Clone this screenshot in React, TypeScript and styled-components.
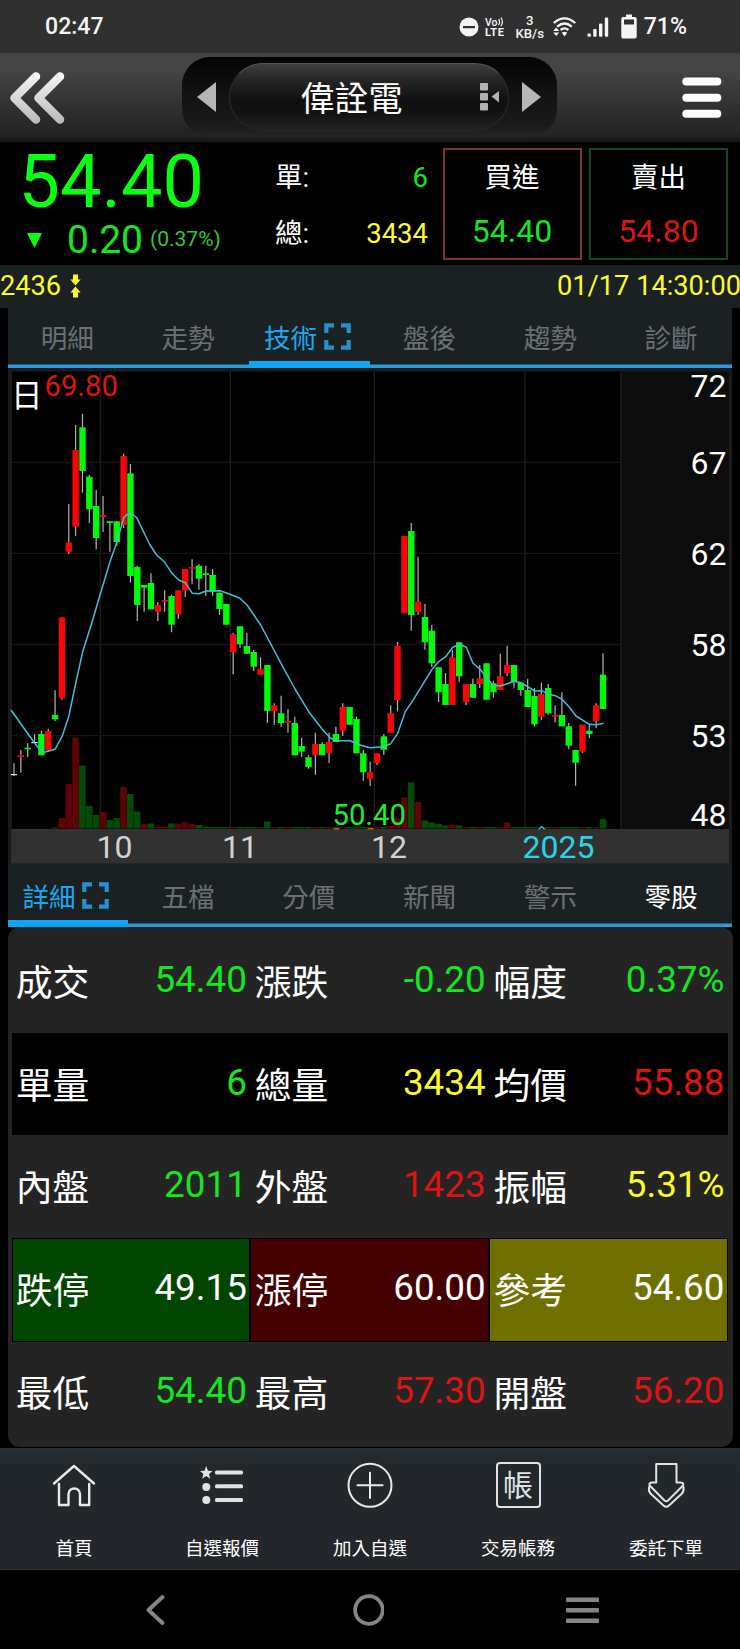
import React from "react";
import styled, { createGlobalStyle } from "styled-components";

const GREEN = "#16e620";
const RED = "#dc1414";
const YELLOW = "#fbfb2a";
const BLUE = "#1ea7ee";
const STRIP = "#1b2123";

const GlobalStyle = createGlobalStyle`
  * { box-sizing: border-box; }
  html, body { margin: 0; padding: 0; background: #000; }
  body { font-family: Roboto, "Noto Sans CJK TC", sans-serif; color: #fff; }
  svg { display: block; flex: none; }
`;

const Screen = styled.div`
  width: 740px;
  height: 1649px;
  display: flex;
  flex-direction: column;
  background: #000;
  overflow: hidden;
  white-space: nowrap;
`;

/* ---------- status bar ---------- */

const StatusBar = styled.div`
  height: 53px;
  flex: none;
  display: flex;
  align-items: center;
  justify-content: space-between;
  padding: 0 53px 0 45px;
  background: #303030;
  font-size: 23.1px;
  font-weight: 500;
  line-height: 28px;
  color: #f4f4f4;
`;

const StatusIcons = styled.div`
  display: flex;
  align-items: center;
`;

const Stack = styled.div<{ $size: number; $width: number; $lead: number }>`
  display: flex;
  flex-direction: column;
  align-items: center;
  width: ${(p) => p.$width}px;
  font-size: ${(p) => p.$size}px;
  line-height: ${(p) => p.$lead}px;
  font-weight: 500;
`;

const Spacer = styled.div<{ $w: number }>`
  width: ${(p) => p.$w}px;
  flex: none;
`;

const VolteIcon = styled.svg`
  overflow: visible;
`;

/* ---------- header ---------- */

const Header = styled.div`
  height: 90px;
  flex: none;
  display: flex;
  align-items: flex-start;
  padding-left: 8px;
  background: linear-gradient(#434343 0%, #454545 18%, #2c2c2c 70%, #242424 92%, #151515 100%);
  border-bottom: 1px solid #0a0a0a;
`;

const BackIcon = styled.svg`
  margin: 18px 116px 0 0;
`;

const Selector = styled.div`
  width: 375px;
  height: 80px;
  margin-top: 4px;
  display: flex;
  align-items: center;
  border-radius: 28px;
  background: linear-gradient(#040404, #121212 45%, #1a1a1a 85%, #252525);
`;

const Pill = styled.div`
  width: 280px;
  height: 68px;
  margin: 0 13px 0 12px;
  padding: 0 8px 0 71px;
  display: flex;
  align-items: center;
  border-radius: 34px;
  border: 1px solid #2c2c2c;
  border-top-color: #555;
  border-bottom-color: #262626;
  background: linear-gradient(#3f3f3f 0%, #272727 22%, #101010 55%, #131313 75%, #232323 100%);
`;

const StockName = styled.div`
  font-size: 34px;
  line-height: 44px;
  padding-top: 3px;
  flex: 1;
`;

const MenuIcon = styled.svg`
  margin: 24px 0 0 125px;
`;

/* ---------- quote ---------- */

const Quote = styled.div`
  height: 122px;
  flex: none;
  display: flex;
`;

const PriceBlock = styled.div`
  width: 275px;
  padding: 8px 0 0 18.5px;
`;

const BigPrice = styled.div`
  font-size: 73.8px;
  line-height: 62px;
  color: #0bff10;
`;

const ChangeRow = styled.div`
  display: flex;
  align-items: center;
  height: 54px;
  padding-left: 8.5px;
  color: ${GREEN};
`;

const Change = styled.div`
  margin-left: 25px;
  width: 83px;
  font-size: 39px;
  line-height: 54px;
`;

const ChangePct = styled.div`
  font-size: 21px;
  line-height: 50px;
  color: #32c832;
  padding-bottom: 3px;
`;

const VolumeBlock = styled.div`
  width: 153px;
  margin-right: 14.5px;
  padding-top: 7px;
`;

const VolumeRow = styled.div`
  display: flex;
  justify-content: space-between;
  font-size: 27.5px;
  line-height: 56px;
  height: 56px;
`;

const Num = styled.span<{ $c: string }>`
  color: ${(p) => p.$c};
`;

const SideBox = styled.div<{ $edge: string }>`
  width: 139px;
  height: 112px;
  margin: 5px 7.5px 0 0;
  padding-top: 2px;
  border: 2px solid ${(p) => p.$edge};
  display: flex;
  flex-direction: column;
  align-items: center;
`;

const SideLabel = styled.div`
  font-size: 27.5px;
  line-height: 52px;
`;

const SidePrice = styled.div<{ $c: string }>`
  font-size: 32px;
  line-height: 54px;
  color: ${(p) => p.$c};
`;

const TimeStrip = styled.div`
  height: 43px;
  flex: none;
  display: flex;
  align-items: center;
  padding-bottom: 2px;
  background: ${STRIP};
  color: ${YELLOW};
  font-size: 27.2px;
  line-height: 36px;
`;

const Stamp = styled.div`
  margin-left: auto;
  margin-right: -1px;
`;

/* ---------- tabs ---------- */

const Tabs = styled.div<{ $h: number }>`
  height: ${(p) => p.$h}px;
  flex: none;
  margin: 0 8px 0 7.5px;
  display: grid;
  grid-template-columns: repeat(6, 1fr);
  background: ${STRIP};
  box-shadow: inset 0 -3.5px 0 #2a9cdb;
`;

const Tab = styled.div<{ $active?: boolean; $bright?: boolean; $top: number }>`
  display: flex;
  justify-content: center;
  gap: 6.5px;
  padding-top: ${(p) => p.$top}px;
  padding-right: ${(p) => (p.$active ? 4 : 1)}px;
  font-size: 26.6px;
  line-height: 40px;
  color: ${(p) => (p.$active ? BLUE : p.$bright ? "#fff" : "#6a7073")};
  border-bottom: ${(p) => (p.$active ? "7px solid #0ea6f4" : "0")};
  & > svg { margin-top: 4px; }
`;

/* ---------- detail table ---------- */

const Detail = styled.div`
  height: 520px;
  flex: none;
  margin: 0 7.5px;
  padding: 3px 4.5px 3px 4px;
  border-radius: 12px;
  background: #242424;
`;

const Row = styled.div<{ $dark?: boolean }>`
  display: grid;
  grid-template-columns: repeat(3, 1fr);
  height: 102.7px;
  background: ${(p) => (p.$dark ? "#000" : "transparent")};
`;

const Cell = styled.div<{ $bg?: string }>`
  display: flex;
  justify-content: space-between;
  padding: 0 ${(p) => (p.$bg ? 2.5 : 3.5)}px 0 ${(p) => (p.$bg ? 3.3 : 4.3)}px;
  font-size: 36.8px;
  line-height: ${(p) => (p.$bg ? 98 : 99)}px;
  background: ${(p) => p.$bg || "transparent"};
  border: ${(p) => (p.$bg ? "1px solid #000" : "0")};
`;

const CellLabel = styled.span`
  padding-top: 4px;
`;

/* ---------- bottom navigation ---------- */

const Nav = styled.div`
  height: 122px;
  flex: none;
  margin-top: 1px;
  display: grid;
  grid-template-columns: repeat(5, 1fr);
  background: linear-gradient(#2b2f32, #23282c 8%, #23272b);
  border-bottom: 1px solid #2c3032;
`;

const NavItem = styled.div`
  display: flex;
  flex-direction: column;
  align-items: center;
  padding-top: 12px;
  font-size: 18.5px;
  line-height: 30px;
  gap: 24px;
`;

const LedgerIcon = styled.div`
  width: 45px;
  height: 46px;
  margin: 2px 0;
  border: 2px solid #dfe3e6;
  border-radius: 4px;
  font-size: 30px;
  line-height: 43px;
  text-align: center;
  color: #dfe3e6;
`;

const SystemBar = styled.div`
  flex: 1;
  display: flex;
  justify-content: space-between;
  align-items: center;
  padding: 0 141px 0 145px;
`;

/* ---------- chart data ---------- */

type Candle = [string, number, number, number, number];

// colour, high, body top, body bottom, low (y positions on the plot)
const CANDLES: Candle[] = [
  ["w", 763.3, 774, 775, 776], ["r", 750, 755.3, 757, 772.7], ["g", 743.3, 747.7, 749.3, 757],
  ["w", 734.3, 742, 743, 743], ["g", 730.7, 734, 755.3, 755.3], ["r", 728.7, 731, 750.3, 752],
  ["g", 690.3, 715, 719, 721], ["r", 617.3, 617.3, 698, 699.7], ["r", 504, 542.7, 551.7, 554],
  ["r", 425, 450, 526.7, 536], ["g", 413.7, 427.3, 471, 492.7], ["g", 475, 476.7, 509.3, 523],
  ["g", 490, 506, 538, 549.5], ["r", 496, 515, 517, 532], ["g", 521.3, 521.3, 523, 551.7],
  ["g", 521.3, 521.3, 542, 546], ["r", 453.7, 456, 525, 528], ["g", 464, 473.3, 576, 582.7],
  ["g", 565.7, 567, 605, 621], ["g", 585, 585, 587.7, 611.7], ["g", 573.3, 583, 609.3, 609.3],
  ["r", 602, 605, 611.7, 621], ["r", 590.3, 600, 601.7, 611.7], ["g", 594.7, 596, 624.7, 632.3],
  ["r", 590.3, 590.3, 614.3, 619], ["r", 569, 569, 590.3, 597], ["r", 559.3, 567, 568.7, 584.3],
  ["g", 564, 565.7, 578.7, 589.7], ["g", 565.7, 573.3, 575, 595.7], ["g", 569, 575, 591.7, 595.7],
  ["g", 592.7, 592.7, 609, 615], ["g", 604, 604, 624.7, 624.7], ["r", 632.7, 634.3, 652, 674.3],
  ["g", 626.3, 626.3, 644.3, 647.7], ["g", 632.7, 646, 653.7, 653.7], ["g", 650, 652, 666.7, 671],
  ["r", 657.3, 669, 674.7, 674.7], ["g", 665, 665, 711, 723], ["r", 703.3, 705.3, 711.3, 724.7],
  ["g", 695.7, 713.3, 723, 726.7], ["r", 709.3, 721, 722.7, 732.7], ["g", 716.7, 723, 755.3, 755.3],
  ["g", 738, 746, 751.7, 757], ["g", 755.3, 757.3, 767, 768.7], ["r", 732.7, 744, 755.3, 774.7],
  ["g", 742.3, 744, 755.3, 755.3], ["r", 732.7, 742, 753.3, 763], ["g", 726.7, 734, 742, 742],
  ["r", 703.3, 707, 730.7, 736], ["g", 707, 707, 724.7, 724.7], ["g", 716.7, 719, 753.3, 753.3],
  ["g", 749.7, 753.3, 772.3, 780.7], ["r", 761.7, 772.3, 778.7, 786], ["r", 753.3, 753.3, 763, 765],
  ["g", 734, 736.3, 749.7, 755], ["r", 705.3, 713.3, 732.7, 732.7], ["r", 642, 645.7, 700, 711.3],
  ["r", 536, 536, 613.3, 613.3], ["g", 523, 531, 615, 630.7], ["r", 557, 601.7, 612, 615],
  ["g", 604, 617, 642.3, 649.7], ["g", 624.7, 630.7, 663.3, 667], ["g", 667.3, 667.3, 692.3, 702],
  ["g", 673, 684, 705, 705], ["r", 650, 657.3, 705, 705], ["g", 642.3, 642.3, 676.3, 682],
  ["r", 684, 684, 702, 705], ["g", 678.7, 684, 697.7, 697.7], ["r", 665, 678.3, 684, 688],
  ["g", 663.3, 663.3, 699.7, 699.7], ["g", 680.7, 683.3, 692.3, 697.7], ["r", 653.7, 676.3, 690, 690],
  ["r", 645.7, 665, 673.3, 676], ["g", 665, 665, 682, 687.7], ["g", 683, 683, 690, 695.7],
  ["g", 678.7, 690, 707, 707], ["g", 688.3, 696, 724.3, 726.3], ["r", 682.7, 694, 716.7, 720.3],
  ["g", 684, 688, 713.3, 714.7], ["r", 705.3, 715, 716.7, 722.3], ["g", 692.3, 715, 726.3, 726.3],
  ["g", 723, 726.3, 745.7, 749.3], ["g", 750, 750, 762.7, 785.7], ["r", 724.7, 724.7, 751.7, 753],
  ["g", 724.7, 730.7, 734, 738], ["r", 703.3, 705.3, 721, 728.3], ["g", 653.3, 674.7, 709, 709],
];

// bar height by candle index; the rest are a thin trace at the base
const VOLUMES: Record<number, number> = {
  0: 0, 1: 0, 2: 0, 3: 0, 4: 0, 5: 0, 6: 1, 7: 10.5, 8: 44.5, 9: 91, 10: 63, 11: 22.5, 12: 13.5, 13: 16.5,
  14: 8.5, 15: 10.5, 16: 41.5, 17: 34.5, 18: 17, 19: 4.5, 20: 5, 21: 2, 22: 2, 23: 5, 24: 4.5, 25: 6,
  26: 4.5, 27: 3.5, 28: 2, 37: 7, 55: 3, 56: 10, 57: 31, 58: 46, 59: 26.5, 60: 8, 61: 6, 62: 4.5,
  63: 3, 64: 4, 65: 3, 72: 6, 86: 9.5,
};

const AVERAGE =
  "11,710 34.7,743.3 40,750 44.3,752.3 55,749.3 62,736.7 68.7,716.7 75.7,683.3 82.7,651.7 92.7,620 100,595 110,561.7 117,541.7 123.7,517.7 126.5,514.8 130,514 133.5,515 136.7,517.7 150,545 156.7,555 164.7,562.3 172,573.3 178.7,580 185.3,582.7 192.3,593.3 199,593.7 206,591 220,590.7 230,594.3 240,598.3 247,605 260.7,625 281,663.3 295,689 308.7,711.7 322.3,729.3 330,737.7 336.7,740.7 350,740.7 360,745 370,747.7 384,746.7 390.7,743.7 397.7,733.3 405.3,711.7 411.7,702.3 432,669.3 438.7,661.7 445.7,656.7 452.7,647.3 459.3,644 466.3,647.3 473,663.3 480,669.3 490,681.7 493,685.3 500.3,686 514,681.3 521,682.7 534.7,691 541.7,690.7 548.3,694.3 555.3,695.7 562,699.3 569,706.7 576,716 589.3,724.3 596.3,724.7 603.7,723.3";

const BODY: Record<string, string> = { r: "#fb0408", g: "#02fb0a", w: "#ddd" };
const candleX = (i: number) => 14 + i * 6.849;

const ChartWrap = styled.div`
  height: 496px;
  flex: none;
`;

const ChartText = styled.text`
  font-family: Roboto, "Noto Sans CJK TC", sans-serif;
`;

const Chart = () => (
  <ChartWrap>
    <svg width="740" height="496" viewBox="0 368 740 496">
      <rect x="8" y="368" width="724" height="496" fill="#1b1b1b" />
      <rect x="12" y="371.5" width="609" height="457.5" fill="#000" />
      <rect x="621" y="371.5" width="108" height="457.5" fill="#0c0c0c" />
      <g stroke="#202020" strokeWidth="1.3">
        {[100.3, 230.3, 374.3, 525, 621].map((x) => (
          <line key={x} x1={x} x2={x} y1="372" y2="829" />
        ))}
      </g>
      <g stroke="#141414" strokeWidth="1.3">
        {[462.3, 553.3, 644.5, 735.7].map((y) => (
          <line key={y} x1="12" x2="621" y1={y} y2={y} />
        ))}
      </g>
      {CANDLES.map((c, i) => {
        const h = VOLUMES[i] ?? 1.6;
        return (
          <rect
            key={i}
            x={candleX(i) - 3.4}
            y={828.5 - h}
            width="6.6"
            height={h}
            fill={c[0] === "g" && i !== 19 ? "#054a08" : "#5e0406"}
          />
        );
      })}
      {CANDLES.map(([c, hi, top, bottom, lo], i) => (
        <g key={i}>
          <line x1={candleX(i)} x2={candleX(i)} y1={hi} y2={lo} stroke="#b5b5b5" strokeWidth="1.2" />
          <rect x={candleX(i) - 3.2} y={top} width="6.4" height={Math.max(bottom - top, 1.2)} fill={BODY[c]} />
        </g>
      ))}
      <polyline points={AVERAGE} fill="none" stroke="#46bdd6" strokeWidth="1.5" strokeLinejoin="round" />
      <rect x="11" y="829" width="718" height="34.5" fill="#313131" />
      <rect x="333.5" y="828" width="6" height="1.5" fill="#a8642a" />
      <rect x="367.5" y="828" width="6" height="1.5" fill="#a8642a" />
      <path d="M538.8 829.2L541.7 826.6L544.6 829.2" fill="none" stroke="#2bd3e6" strokeWidth="1.3" />
      <ChartText x="11" y="406.5" fontSize="31.5" fill="#fff">日</ChartText>
      <ChartText x="44.5" y="396.3" fontSize="29.2" fill={RED}>69.80</ChartText>
      <ChartText x="332.5" y="825.3" fontSize="29.2" fill="#22ee2a">50.40</ChartText>
      <g fontSize="32" fill="#fff" textAnchor="end">
        <ChartText x="726.5" y="397">72</ChartText>
        <ChartText x="726.5" y="474">67</ChartText>
        <ChartText x="726.5" y="564.5">62</ChartText>
        <ChartText x="726.5" y="655.5">58</ChartText>
        <ChartText x="726.5" y="746.7">53</ChartText>
        <ChartText x="726.5" y="825.5">48</ChartText>
      </g>
      <g fontSize="32" fill="#d2d2d2">
        <ChartText x="96.5" y="857.5">10</ChartText>
        <ChartText x="222" y="857.5">11</ChartText>
        <ChartText x="371" y="857.5">12</ChartText>
        <ChartText x="522.5" y="857.5" fill="#2bd3e6">2025</ChartText>
      </g>
    </svg>
  </ChartWrap>
);

/* ---------- icons ---------- */

const Expand = () => (
  <svg width="27" height="27" viewBox="0 0 27 27" fill="none" stroke="#2391cf" strokeWidth="4.2">
    <path d="M2.3 10V2.3H10M17 2.3H24.7V10M24.7 17V24.7H17M10 24.7H2.3V17" />
  </svg>
);

const HomeIcon = () => (
  <svg width="50" height="50" viewBox="0 0 50 50" fill="none" stroke="#e6eaed" strokeWidth="2.4" strokeLinejoin="round" strokeLinecap="round">
    <path d="M5 23.5L25 6L45 23.5" />
    <path d="M10 24V45H19.500V34.500C19.500 26.500 31 26.500 31 34.500V45H40.200V24" />
  </svg>
);

const ListIcon = () => (
  <svg width="50" height="50" viewBox="0 0 50 50" fill="#dfe3e6">
    <path d="M9.200 6L11 10.800L15.500 11L12 14L13.200 18.800L9.200 16L5.200 18.800L6.400 14L3 11L7.500 10.800Z" />
    <circle cx="9.300" cy="27" r="4" />
    <circle cx="9.300" cy="40" r="4" />
    <rect x="18" y="10.500" width="28" height="4" rx="1.500" />
    <rect x="18" y="24.300" width="28" height="4" rx="1.500" />
    <rect x="18" y="38" width="28" height="4" rx="1.500" />
  </svg>
);

const PlusIcon = () => (
  <svg width="50" height="50" viewBox="0 0 50 50" fill="none" stroke="#e6eaed" strokeWidth="2" strokeLinecap="round">
    <circle cx="25" cy="25.300" r="21.500" />
    <path d="M25 12.800V38M12.400 25.300H37.600" />
  </svg>
);

const OrderIcon = () => (
  <svg width="50" height="50" viewBox="0 0 50 50" fill="none" stroke="#dfe3e6" strokeWidth="2" strokeLinejoin="round" strokeLinecap="round">
    <path d="M15.200 4H35.500V22.500H39.500C42.500 22.500 43 24 41.500 26L27 40.500Q25.300 42 23.500 40.500L9.200 26C7.500 24 8.500 22.500 11 22.500H15.200Z" />
    <path d="M8.300 26.500C7.500 29.500 7.800 31.500 9.500 33.500L22.500 45.500Q25.200 48 28 45.500L41 33.500C42.800 31.500 43 29.500 42.300 26.500" />
  </svg>
);

const NAV_ITEMS: [React.ReactNode, string][] = [
  [<HomeIcon />, "首頁"],
  [<ListIcon />, "自選報價"],
  [<PlusIcon />, "加入自選"],
  [<LedgerIcon>帳</LedgerIcon>, "交易帳務"],
  [<OrderIcon />, "委託下單"],
];

type Field = [string, string, string, string?];

const ROWS: { dark?: boolean; cells: Field[] }[] = [
  { cells: [["成交", "54.40", GREEN], ["漲跌", "-0.20", GREEN], ["幅度", "0.37%", GREEN]] },
  { dark: true, cells: [["單量", "6", GREEN], ["總量", "3434", YELLOW], ["均價", "55.88", RED]] },
  { cells: [["內盤", "2011", GREEN], ["外盤", "1423", RED], ["振幅", "5.31%", YELLOW]] },
  { cells: [["跌停", "49.15", "#fff", "#004500"], ["漲停", "60.00", "#fff", "#450000"], ["參考", "54.60", "#fff", "#707000"]] },
  { cells: [["最低", "54.40", GREEN], ["最高", "57.30", RED], ["開盤", "56.20", RED]] },
];

const UPPER_TABS = ["明細", "走勢", "技術", "盤後", "趨勢", "診斷"];
const LOWER_TABS = ["詳細", "五檔", "分價", "新聞", "警示", "零股"];

export default function App() {
  return (
    <Screen>
      <GlobalStyle />
      <StatusBar>
        <div>02:47</div>
        <StatusIcons>
          <svg width="20" height="20" viewBox="0 0 20 20">
            <circle cx="10" cy="10" r="9.500" fill="#f4f4f4" />
            <rect x="4" y="9" width="12" height="2.200" fill="#303030" />
          </svg>
          <Spacer $w={6} />
          <VolteIcon width="20" height="20" viewBox="0 0 20 20" fill="#f4f4f4">
            <text x="0" y="8.500" fontSize="10.500" fontWeight="500" fontFamily="Roboto">Vo</text>
            <text x="0" y="19" fontSize="11" fontWeight="700" fontFamily="Roboto" textLength="19">LTE</text>
            <path d="M13.600 2.200Q15.600 4.800 13.600 8M15.800 0.600Q19 4.600 15.800 9.200" fill="none" stroke="#f4f4f4" strokeWidth="1.200" />
          </VolteIcon>
          <Spacer $w={10} />
          <Stack $size={13.2} $width={29} $lead={13}>
            <span>3</span>
            <span>KB/s</span>
          </Stack>
          <Spacer $w={9} />
          <svg width="23" height="20" viewBox="0 0 23 20" fill="none" stroke="#f4f4f4" strokeWidth="2.300">
            <path d="M0.800 6Q11.500 -3.200 22.200 6" />
            <path d="M4.200 9.600Q11.500 3.400 18.800 9.600" />
            <path d="M7.600 13Q11.500 9.800 15.400 13" />
            <path d="M11.500 19.500L8.800 15.800Q11.500 13.600 14.200 15.800Z" fill="#f4f4f4" stroke="none" />
            <path d="M3.200 10.500L6.200 14H0.200ZM3.200 19L0.200 15.500H6.200Z" fill="#f4f4f4" stroke="none" />
          </svg>
          <Spacer $w={11} />
          <svg width="22" height="20" viewBox="0 0 22 20" fill="#f4f4f4">
            <rect x="0.500" y="16.500" width="3.400" height="3.300" rx="1" />
            <rect x="6.200" y="12" width="3.400" height="7.800" rx="1" />
            <rect x="12" y="6.500" width="3.400" height="13.300" rx="1" />
            <rect x="17.800" y="0.500" width="3.400" height="19.300" rx="1" />
          </svg>
          <Spacer $w={12} />
          <svg width="16" height="25" viewBox="0 0 16 25">
            <path d="M5 0.500H11V3H14Q15.700 3 15.700 4.700V22.800Q15.700 24.500 14 24.500H2Q0.300 24.500 0.300 22.800V4.700Q0.300 3 2 3H5Z" fill="#f4f4f4" />
            <rect x="3" y="5.500" width="10" height="5" fill="#303030" />
          </svg>
          <Spacer $w={6.5} />
          <span>71%</span>
        </StatusIcons>
      </StatusBar>

      <Header>
        <BackIcon width="58" height="56" viewBox="8 71 58 56" fill="none" strokeWidth="8.500" strokeLinecap="round" strokeLinejoin="round">
          <defs>
            <linearGradient id="chev" x1="0" y1="71" x2="0" y2="127" gradientUnits="userSpaceOnUse">
              <stop offset="0" stopColor="#fafafa" />
              <stop offset="1" stopColor="#b4b4b4" />
            </linearGradient>
          </defs>
          <path d="M36 76.500L14.500 98L36 119.500M60 76.500L38.500 98L60 119.500" stroke="url(#chev)" />
        </BackIcon>
        <Selector>
          <Spacer $w={14.5} />
          <svg width="20" height="30" viewBox="0 0 20 30"><path d="M0 15L19 0V30Z" fill="#b6b6b6" /></svg>
          <Pill>
            <StockName>偉詮電</StockName>
            <svg width="20" height="28" viewBox="0 0 20 28" fill="#b2b2b2">
              <rect x="0" y="0" width="8" height="7.500" rx="1" />
              <rect x="0" y="10" width="8" height="7.500" rx="1" />
              <rect x="0" y="20" width="8" height="7.500" rx="1" />
              <path d="M11.500 13.500L19 8V19.500Z" />
            </svg>
          </Pill>
          <svg width="20" height="30" viewBox="0 0 20 30"><path d="M19 15L0 0V30Z" fill="#b6b6b6" /></svg>
        </Selector>
        <MenuIcon width="40" height="41" viewBox="0 0 40 41" fill="#fff">
          <rect x="0.300" y="0.500" width="39" height="8" rx="4" />
          <rect x="0.300" y="16.700" width="39" height="8" rx="4" />
          <rect x="0.300" y="32.800" width="39" height="8" rx="4" />
        </MenuIcon>
      </Header>

      <Quote>
        <PriceBlock>
          <BigPrice>54.40</BigPrice>
          <ChangeRow>
            <svg width="15" height="15" viewBox="0 0 15 15"><path d="M0 0H15L7.500 15Z" fill="#0bff10" /></svg>
            <Change>0.20</Change>
            <ChangePct>(0.37%)</ChangePct>
          </ChangeRow>
        </PriceBlock>
        <VolumeBlock>
          <VolumeRow><span>單:</span><Num $c={GREEN}>6</Num></VolumeRow>
          <VolumeRow><span>總:</span><Num $c={YELLOW}>3434</Num></VolumeRow>
        </VolumeBlock>
        <SideBox $edge="#7c3439">
          <SideLabel>買進</SideLabel>
          <SidePrice $c={GREEN}>54.40</SidePrice>
        </SideBox>
        <SideBox $edge="#1a4323">
          <SideLabel>賣出</SideLabel>
          <SidePrice $c={RED}>54.80</SidePrice>
        </SideBox>
      </Quote>

      <TimeStrip>
        <span>2436</span>
        <Spacer $w={9} />
        <svg width="11" height="24" viewBox="0 0 11 24" fill={YELLOW}>
          <path d="M3 0.500H8V5.500H10.700L5.500 11.500L0.300 5.500H3Z" />
          <path d="M3 23.500H8V18.500H10.700L5.500 12.500L0.300 18.500H3Z" />
        </svg>
        <Stamp>01/17 14:30:00</Stamp>
      </TimeStrip>

      <Tabs $h={60}>
        {UPPER_TABS.map((t, i) => (
          <Tab key={t} $active={i === 2} $top={11}>
            {t}
            {i === 2 && <Expand />}
          </Tab>
        ))}
      </Tabs>

      <Chart />

      <Tabs $h={63}>
        {LOWER_TABS.map((t, i) => (
          <Tab key={t} $active={i === 0} $bright={i === 5} $top={14}>
            {t}
            {i === 0 && <Expand />}
          </Tab>
        ))}
      </Tabs>

      <Detail>
        {ROWS.map((row, i) => (
          <Row key={i} $dark={row.dark}>
            {row.cells.map(([label, value, color, bg]) => (
              <Cell key={label} $bg={bg}>
                <CellLabel>{label}</CellLabel>
                <Num $c={color}>{value}</Num>
              </Cell>
            ))}
          </Row>
        ))}
      </Detail>

      <Nav>
        {NAV_ITEMS.map(([icon, label]) => (
          <NavItem key={label}>
            {icon}
            <span>{label}</span>
          </NavItem>
        ))}
      </Nav>

      <SystemBar>
        <svg width="22" height="32" viewBox="0 0 22 32" fill="none" stroke="#858585" strokeWidth="4" strokeLinecap="round" strokeLinejoin="round">
          <path d="M17.500 3L3.500 16L17.500 29" />
        </svg>
        <svg width="34" height="34" viewBox="0 0 34 34" fill="none" stroke="#858585" strokeWidth="3.800">
          <circle cx="19" cy="17" r="13.800" transform="translate(-0.100 0)" />
        </svg>
        <svg width="33" height="26" viewBox="0 0 33 26" fill="#858585">
          <rect x="0" y="0.500" width="33" height="4.400" rx="1" />
          <rect x="0" y="11" width="33" height="4.400" rx="1" />
          <rect x="0" y="21.500" width="33" height="4.400" rx="1" />
        </svg>
      </SystemBar>
    </Screen>
  );
}
